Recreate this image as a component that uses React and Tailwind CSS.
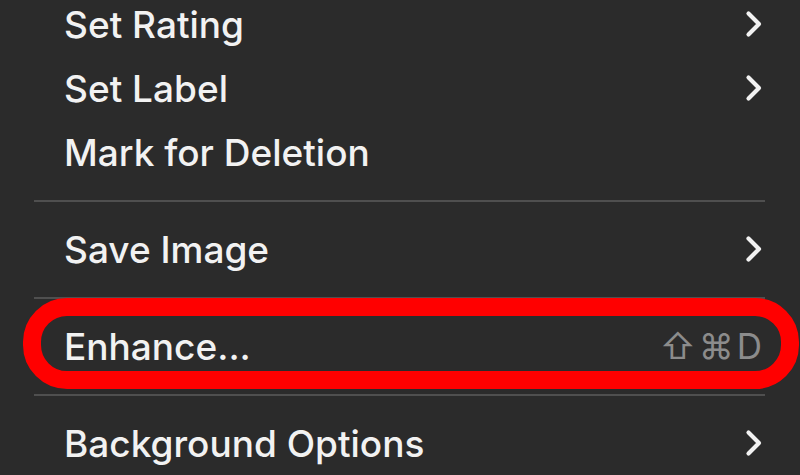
const ITEMS = [
    { type: 'item', label: 'Set Rating', sub: true },
    { type: 'item', label: 'Set Label', sub: true },
    { type: 'item', label: 'Mark for Deletion' },
    { type: 'sep' },
    { type: 'item', label: 'Save Image', sub: true },
    { type: 'sep' },
    { type: 'item', label: 'Enhance...', shortcut: '⇧⌘D' },
    { type: 'sep' },
    { type: 'item', label: 'Background Options', sub: true },
];

function Chevron() {
    return (
        <svg width="22" height="28" viewBox="0 0 22 28" fill="none">
            <path d="M5.5 3.5 L16 14 L5.5 24.5" stroke="#f2f2f2" strokeWidth="4.2" strokeLinecap="round" strokeLinejoin="round" />
        </svg>
    );
}

export default function App() {
    return (
        <div className="relative w-[800px] h-[475px] overflow-hidden bg-[#2b2b2b] text-[#f2f2f2]"
            style={{ fontFamily: 'Inter, "DejaVu Sans", sans-serif' }}>
            <div className="flex flex-col -mt-2">
                {ITEMS.map((it, i) =>
                    it.type === 'sep' ? (
                        <div key={i} className="h-[33px] flex items-center pl-[34px] pr-[35px]">
                            <div className="h-[2px] w-full bg-[#4f4f4f]" />
                        </div>
                    ) : (
                        <div key={i} className="h-[64px] flex items-center justify-between pl-[64px] pr-[35px]">
                            <span className="text-[37px] font-medium leading-none">{it.label}</span>
                            {it.sub && <Chevron />}
                            {it.shortcut && (
                                <span className="text-[35px] leading-none text-[#8c8c8c] tracking-[3px]">{it.shortcut}</span>
                            )}
                        </div>
                    )
                )}
            </div>

            {/* red annotation */}
            <div className="absolute left-[23px] top-[298px] w-[776px] h-[91px] border-[18px] border-[#ff0000] rounded-[44px]" />
        </div>
    );
}
